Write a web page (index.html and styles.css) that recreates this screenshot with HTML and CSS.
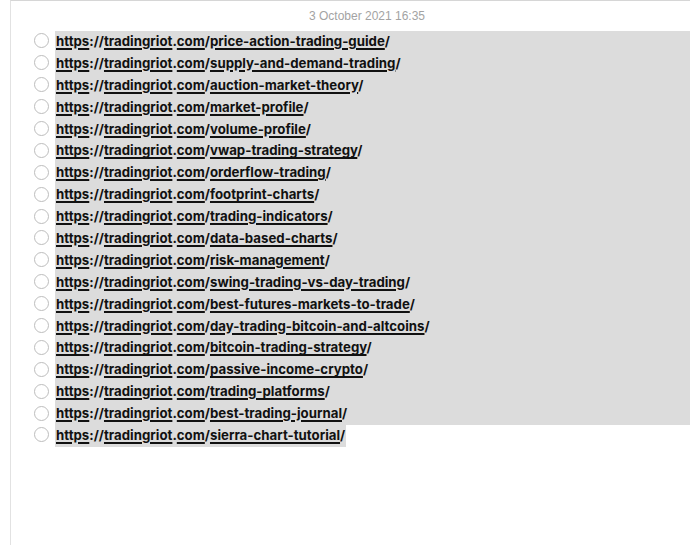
FILE: index.html
```html
<!DOCTYPE html>
<html lang="en">
<head>
    <meta charset="UTF-8">
    <title>Note</title>
    <link rel="stylesheet" href="styles.css">
</head>
<body>
    <div class="note">
        <div class="note-date">3 October 2021 16:35</div>
        <ul class="checklist">
            <li class="item selected"><span class="check"></span><span class="link"><u>https</u>://<u>tradingriot</u>.<u>com</u>/<u>price-action-trading-guide</u>/</span></li>
            <li class="item selected"><span class="check"></span><span class="link"><u>https</u>://<u>tradingriot</u>.<u>com</u>/<u>supply-and-demand-trading</u>/</span></li>
            <li class="item selected"><span class="check"></span><span class="link"><u>https</u>://<u>tradingriot</u>.<u>com</u>/<u>auction-market-theory</u>/</span></li>
            <li class="item selected"><span class="check"></span><span class="link"><u>https</u>://<u>tradingriot</u>.<u>com</u>/<u>market-profile</u>/</span></li>
            <li class="item selected"><span class="check"></span><span class="link"><u>https</u>://<u>tradingriot</u>.<u>com</u>/<u>volume-profile</u>/</span></li>
            <li class="item selected"><span class="check"></span><span class="link"><u>https</u>://<u>tradingriot</u>.<u>com</u>/<u>vwap-trading-strategy</u>/</span></li>
            <li class="item selected"><span class="check"></span><span class="link"><u>https</u>://<u>tradingriot</u>.<u>com</u>/<u>orderflow-trading</u>/</span></li>
            <li class="item selected"><span class="check"></span><span class="link"><u>https</u>://<u>tradingriot</u>.<u>com</u>/<u>footprint-charts</u>/</span></li>
            <li class="item selected"><span class="check"></span><span class="link"><u>https</u>://<u>tradingriot</u>.<u>com</u>/<u>trading-indicators</u>/</span></li>
            <li class="item selected"><span class="check"></span><span class="link"><u>https</u>://<u>tradingriot</u>.<u>com</u>/<u>data-based-charts</u>/</span></li>
            <li class="item selected"><span class="check"></span><span class="link"><u>https</u>://<u>tradingriot</u>.<u>com</u>/<u>risk-management</u>/</span></li>
            <li class="item selected"><span class="check"></span><span class="link"><u>https</u>://<u>tradingriot</u>.<u>com</u>/<u>swing-trading-vs-day-trading</u>/</span></li>
            <li class="item selected"><span class="check"></span><span class="link"><u>https</u>://<u>tradingriot</u>.<u>com</u>/<u>best-futures-markets-to-trade</u>/</span></li>
            <li class="item selected"><span class="check"></span><span class="link"><u>https</u>://<u>tradingriot</u>.<u>com</u>/<u>day-trading-bitcoin-and-altcoins</u>/</span></li>
            <li class="item selected"><span class="check"></span><span class="link"><u>https</u>://<u>tradingriot</u>.<u>com</u>/<u>bitcoin-trading-strategy</u>/</span></li>
            <li class="item selected"><span class="check"></span><span class="link"><u>https</u>://<u>tradingriot</u>.<u>com</u>/<u>passive-income-crypto</u>/</span></li>
            <li class="item selected"><span class="check"></span><span class="link"><u>https</u>://<u>tradingriot</u>.<u>com</u>/<u>trading-platforms</u>/</span></li>
            <li class="item selected"><span class="check"></span><span class="link"><u>https</u>://<u>tradingriot</u>.<u>com</u>/<u>best-trading-journal</u>/</span></li>
            <li class="item last"><span class="check"></span><span class="link"><u>https</u>://<u>tradingriot</u>.<u>com</u>/<u>sierra-chart-tutorial</u>/</span></li>
        </ul>
    </div>
</body>
</html>
```

FILE: styles.css
```css
* {
    margin: 0;
    padding: 0;
    box-sizing: border-box;
}

body {
    background: white;
    font-family: 'Liberation Sans', Arial, sans-serif;
    width: 690px;
    height: 545px;
    overflow: hidden;
}

.note {
    margin-left: 10px;
    height: 545px;
    border-left: 1px solid #e2e2e2;
    border-top: 1px solid #d6d6d6;
}

.note-date {
    text-align: center;
    padding-left: 33px;
    padding-top: 8px;
    height: 30px;
    font-size: 12px;
    color: #a3a3a3;
}

.checklist {
    list-style: none;
}

.item {
    display: flex;
    align-items: center;
    height: 21.9px;
}

.check {
    width: 15px;
    height: 15px;
    border: 1px solid #bdbdbd;
    border-radius: 50%;
    margin-left: 23px;
    margin-right: 6px;
    margin-top: -2px;
    flex-shrink: 0;
}

.link {
    font-family: Inter, sans-serif;
    font-weight: 700;
    font-size: 13.25px;
    color: #111;
    line-height: 21.9px;
    height: 21.9px;
    padding-left: 1px;
    padding-right: 1px;
    background: #dcdcdc;
}

.selected .link {
    flex: 1;
}

.link u {
    text-decoration-thickness: 1.5px;
    text-underline-offset: 2px;
}
```
